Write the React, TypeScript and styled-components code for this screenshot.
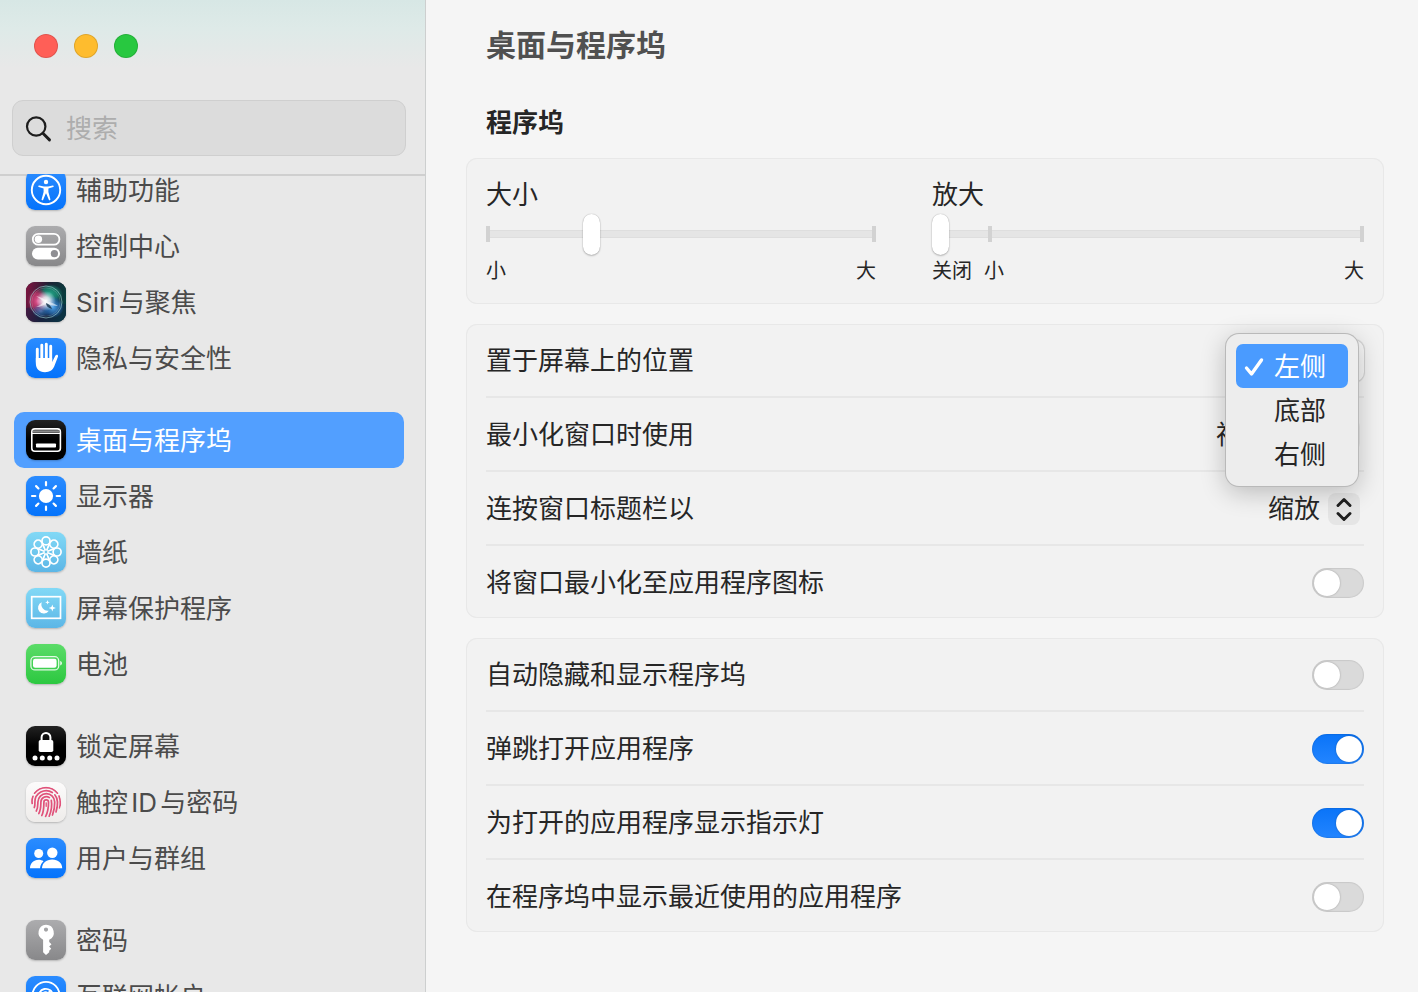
import React, { useState } from "react";
import styled, { createGlobalStyle, css } from "styled-components";

const GlobalStyle = createGlobalStyle`
  *, *::before, *::after { box-sizing: border-box; }
  body {
    margin: 0;
    background: #f5f5f5;
    color: #262626;
    font-family: Inter, "Noto Sans CJK SC", sans-serif;
    font-size: 26px;
    line-height: 36px;
    text-autospace: normal;
  }
  input, select, button { font: inherit; color: inherit; margin: 0; }
`;

const Window = styled.div`
  display: flex;
  height: 100vh;
  overflow: hidden;
`;

/* ---------- sidebar ---------- */

const Sidebar = styled.aside`
  display: flex;
  flex-direction: column;
  flex: 0 0 426px;
  min-width: 0;
  border-right: 1px solid #cdcfcf;
  background: linear-gradient(180deg, #d7e7e5 0, #deeae8 28px, #e8e8e8 68px, #e8e8e8 100%);
`;

const SidebarHeader = styled.div`
  display: flex;
  flex-direction: column;
  gap: 42px;
  padding: 34px 19px 18px 12px;
`;

const TrafficLights = styled.div`
  display: flex;
  gap: 16px;
  padding-left: 22px;
`;

const Light = styled.button<{ $color: string }>`
  width: 24px;
  height: 24px;
  padding: 0;
  border: 1px solid rgba(0, 0, 0, 0.12);
  border-radius: 50%;
  background: ${(p) => p.$color};
`;

const SearchBox = styled.label`
  display: flex;
  align-items: center;
  gap: 11px;
  height: 56px;
  padding: 1px 12px 0;
  border: 1px solid #cfcfcf;
  border-radius: 11px;
  background: #dcdcdc;
`;

const SearchInput = styled.input`
  flex: 1;
  width: 100%;
  min-width: 0;
  padding: 0;
  border: 0;
  outline: 0;
  background: none;
  &::placeholder { color: #adadad; opacity: 1; }
`;

const NavScroller = styled.nav`
  flex: 1;
  min-height: 0;
  overflow: hidden;
  box-shadow: inset 0 2px #cfcfcf;
`;

const NavGroups = styled.div`
  display: flex;
  flex-direction: column;
  gap: 26px;
  margin-top: -12px;
  padding: 0 21px 0 14px;
`;

const NavGroup = styled.ul`
  margin: 0;
  padding: 0;
  list-style: none;
`;

const NavLink = styled.a<{ $selected: boolean }>`
  display: flex;
  align-items: center;
  gap: 10px;
  height: 56px;
  padding: 0 12px;
  border-radius: 10px;
  color: #4b4b4b;
  text-decoration: none;
  white-space: nowrap;
  ${(p) => p.$selected && css`
    background: #529fff;
    color: #fff;
  `}
`;

const NavLabel = styled.span`
  padding-top: 2px;
`;

const IconTile = styled.span<{ $fill: string }>`
  display: flex;
  align-items: center;
  justify-content: center;
  flex: 0 0 40px;
  height: 40px;
  overflow: hidden;
  border-radius: 9px;
  background: ${(p) => p.$fill};
  box-shadow: 0 1px 2px rgba(0, 0, 0, 0.22);
`;

/* ---------- main pane ---------- */

const Main = styled.main`
  flex: 1;
  min-width: 0;
  padding: 25px 34px 40px 40px;
`;

const Title = styled.h1`
  margin: 0;
  padding: 0 20px;
  color: #505050;
  font-size: 30px;
  line-height: 40px;
  font-weight: 700;
`;

const SectionTitle = styled.h2`
  margin: 0;
  padding: 40px 20px 17px;
  font-size: 26px;
  line-height: 36px;
  font-weight: 700;
`;

const Cards = styled.div`
  display: flex;
  flex-direction: column;
  gap: 20px;
`;

const Card = styled.section`
  padding: 0 20px;
  border-radius: 11px;
  background: #f2f2f2;
  box-shadow: inset 0 0 0 1px #e8e8e8;
`;

const SliderCard = styled(Card)`
  display: grid;
  grid-template-columns: 390fr 432fr;
  gap: 56px;
  padding-top: 19px;
  padding-bottom: 17px;
`;

const SliderField = styled.div`
  display: flex;
  flex-direction: column;
  min-width: 0;
`;

const tick = (at: string) =>
  `linear-gradient(#d2d2d2, #d2d2d2) ${at} 50% / 4px 16px no-repeat`;

const Slider = styled.input<{ $ticks: string[] }>`
  appearance: none;
  display: block;
  width: 100%;
  height: 42px;
  outline: 0;
  background:
    ${(p) => p.$ticks.map(tick).join(", ")},
    linear-gradient(#dedede 1px, #e5e5e5 1px 7px, #dedede 7px) 50% 50% / calc(100% - 4px) 8px no-repeat;
  &::-webkit-slider-thumb {
    appearance: none;
    width: 17px;
    height: 41px;
    border-radius: 9px;
    background: #fff;
    box-shadow: 0 0 1px rgba(0, 0, 0, 0.35), 0 1px 2px rgba(0, 0, 0, 0.22);
  }
`;

const SliderScale = styled.div`
  display: flex;
  gap: 12px;
  font-size: 20px;
  line-height: 32px;
`;

const ScaleEnd = styled.span`
  margin-left: auto;
`;

const Row = styled.div`
  position: relative;
  display: flex;
  align-items: center;
  justify-content: space-between;
  height: 72px;
  padding-top: 2px;
  & + & {
    height: 74px;
    border-top: 2px solid #e7e7e7;
  }
`;

const PickerWrap = styled.div`
  display: flex;
  align-items: center;
  gap: 8px;
  padding-right: 4px;
`;

const PickerSelect = styled.select`
  appearance: none;
  field-sizing: content;
  padding: 0;
  border: 0;
  outline: 0;
  background: none;
`;

const OpenSelect = styled(PickerSelect)`
  width: 128px;
  height: 42px;
  padding-left: 12px;
  border-radius: 10px;
  background: #f6f6f6;
  box-shadow: 0 0 1px 1px rgba(0, 0, 0, 0.14);
`;

const Stepper = styled.span`
  display: flex;
  width: 32px;
  height: 32px;
  border-radius: 8px;
  background: #e5e5e5;
`;

const Menu = styled.div`
  position: absolute;
  z-index: 1;
  top: 10px;
  right: 6px;
  width: 132px;
  padding: 10px;
  border-radius: 13px;
  background: #ededed;
  box-shadow: 0 0 0 1px #b9b9b9, 0 6px 26px rgba(0, 0, 0, 0.24);
`;

const MenuItem = styled.button<{ $active: boolean }>`
  display: flex;
  align-items: center;
  gap: 10px;
  width: 100%;
  height: 44px;
  padding: 2px 8px 0;
  border: 0;
  border-radius: 7px;
  background: ${(p) => (p.$active ? "#4a9bff" : "none")};
  color: ${(p) => (p.$active ? "#fff" : "#262626")};
  white-space: nowrap;
`;

const CheckSlot = styled.span`
  display: flex;
  flex: 0 0 20px;
  height: 20px;
`;

const Switch = styled.input`
  appearance: none;
  display: flex;
  align-items: center;
  width: 52px;
  height: 30px;
  padding: 0 2px;
  border-radius: 15px;
  background: #dadada;
  box-shadow: inset 0 0 1px 1px rgba(0, 0, 0, 0.08);
  &::before {
    content: "";
    width: 26px;
    height: 26px;
    border-radius: 50%;
    background: #fff;
    box-shadow: 0 0 2px rgba(0, 0, 0, 0.3);
  }
  &:checked {
    justify-content: flex-end;
    background: linear-gradient(#0a74f8, #2385ff);
  }
`;

/* ---------- icons ---------- */

const Svg = ({ children }: { children: React.ReactNode }) => (
  <svg width="40" height="40" viewBox="0 0 40 40" fill="none" aria-hidden="true">
    {children}
  </svg>
);

const turns = [0, 45, 90, 135, 180, 225, 270, 315];

const AccessibilityIcon = () => (
  <Svg>
    <circle cx="20" cy="20" r="14.2" stroke="#fff" strokeWidth="1.9" />
    <circle cx="20" cy="12" r="2.2" fill="#fff" />
    <path d="M13.2 15.4 18 16.6h4l4.8-1.2c1-.2 1.3 1.2.4 1.5L22.4 18.4v3.6l2 7.2c.2 1-1.2 1.4-1.6.5L20.2 23.4h-.4l-2.6 6.3c-.4.9-1.8.5-1.6-.5l2-7.2v-3.6l-4.8-1.5c-.9-.3-.6-1.7.4-1.5Z" fill="#fff" />
  </Svg>
);

const ControlCenterIcon = () => (
  <Svg>
    <rect x="6.8" y="7.8" width="26.6" height="10.8" rx="5.4" stroke="#fff" strokeWidth="1.8" />
    <circle cx="12.4" cy="13.2" r="3.7" fill="#fff" />
    <rect x="6" y="21.8" width="28" height="11.6" rx="5.8" fill="#fff" />
    <circle cx="28.4" cy="27.6" r="3.6" fill="#8e8e93" />
  </Svg>
);

const SiriIcon = () => (
  <Svg>
    <defs>
      <linearGradient id="siriBg" x1="0" y1="8" x2="40" y2="18" gradientUnits="userSpaceOnUse">
        <stop stopColor="#7d1440" /><stop offset=".5" stopColor="#1d2134" /><stop offset="1" stopColor="#07403f" />
      </linearGradient>
      <radialGradient id="siriPink"><stop stopColor="#ea5a94" /><stop offset=".6" stopColor="#c8386f" stopOpacity=".75" /><stop offset="1" stopColor="#a82458" stopOpacity="0" /></radialGradient>
      <radialGradient id="siriGreen"><stop stopColor="#25a486" /><stop offset=".6" stopColor="#178a72" stopOpacity=".8" /><stop offset="1" stopColor="#12806c" stopOpacity="0" /></radialGradient>
      <radialGradient id="siriBlue"><stop stopColor="#52a8ee" /><stop offset=".6" stopColor="#2a70b8" stopOpacity=".7" /><stop offset="1" stopColor="#1d62b8" stopOpacity="0" /></radialGradient>
      <radialGradient id="siriCore"><stop stopColor="#fff" /><stop offset=".4" stopColor="#f6f8ff" stopOpacity=".8" /><stop offset="1" stopColor="#cfe4ff" stopOpacity="0" /></radialGradient>
    </defs>
    <rect width="40" height="40" fill="url(#siriBg)" />
    <path d="M0 26 40 22v18H0Z" fill="#12204c" opacity=".4" />
    <ellipse cx="24" cy="12" rx="13" ry="10" fill="url(#siriGreen)" />
    <ellipse cx="12" cy="19" rx="11" ry="13" fill="url(#siriPink)" />
    <ellipse cx="27" cy="25" rx="11" ry="11" fill="url(#siriBlue)" />
    <ellipse cx="15" cy="29" rx="9" ry="7" fill="url(#siriBlue)" opacity=".6" />
    <circle cx="20" cy="19" r="10" fill="url(#siriCore)" />
    <path d="M10 14c5 1 9 3 11 6 4 0 8 2 11 4-5 0-9-1-11-3-3 2-6 4-11 4 4-2 6-3 8-5-2-2-5-4-8-6Z" fill="#fff" opacity=".55" />
    <path d="M20 21c3 1 5 3 6 6-4-1-6-3-6-6Z" fill="#0e2a44" opacity=".8" />
    <circle cx="20" cy="20" r="16" stroke="#9ccbcc" strokeOpacity=".65" strokeWidth="1" />
    <circle cx="20" cy="20" r="14.2" stroke="#fff" strokeOpacity=".2" strokeWidth=".8" />
  </Svg>
);

const HandIcon = () => (
  <Svg>
    <g stroke="#fff" strokeWidth="2.9" strokeLinecap="round">
      <path d="M11.3 11.2v13M15.8 7.2V22M20.3 6.3V22M24.700 8.300V23" />
    </g>
    <path d="M9.850 20h16.300v4l3.300-6.500c.9-1.500 3-.8 2.600.9L28.200 28.600c-1.700 3.800-4.500 5.600-9.200 5.600-6 0-9.150-3.500-9.150-8.600Z" fill="#fff" />
  </Svg>
);

const DockIcon = () => (
  <Svg>
    <rect x="5.8" y="8.9" width="28.6" height="22.4" rx="3" stroke="#fff" strokeWidth="1.6" />
    <path d="M6.600 11.200h27" stroke="#8b8b8b" strokeWidth="2" />
    <path d="M6 13.300h28" stroke="#fff" strokeWidth="1.300" />
    <rect x="10" y="23.400" width="20" height="4.200" rx=".8" fill="#fff" />
  </Svg>
);

const SunIcon = () => (
  <Svg>
    <circle cx="20" cy="20" r="7.100" fill="#fff" />
    {turns.map((t) => (
      <path key={t} d="M20 9.300V6" stroke="#fff" strokeWidth="2.200" strokeLinecap="round" transform={`rotate(${t} 20 20)`} />
    ))}
  </Svg>
);

const FlowerIcon = () => (
  <Svg>
    {turns.map((t) => (
      <g key={t} stroke="#fff" strokeLinejoin="round" transform={`rotate(${t} 20 20)`}>
        <circle cx="20" cy="8.900" r="4" strokeWidth="1.700" />
        <path d="M16.600 11.200 20 20l3.400-8.800" strokeWidth="1.300" />
      </g>
    ))}
    <circle cx="20" cy="20" r="1.400" fill="#6fc6ea" />
  </Svg>
);

const ScreenSaverIcon = () => (
  <Svg>
    <rect x="5.700" y="8.700" width="28.800" height="21.600" stroke="#fff" strokeWidth="1.700" />
    <path d="M15.800 14.300a5.800 5.800 0 1 0 7 8.400 6.300 6.300 0 0 1-7-8.400Z" fill="#fff" />
    <path d="m21.500 12 .6 1.700 1.700.6-1.700.6-.6 1.700-.6-1.700-1.700-.6 1.700-.6ZM26.300 16.400l.9 2.700 2.700.9-2.700.9-.9 2.700-.9-2.700-2.700-.9 2.700-.9Z" fill="#fff" />
  </Svg>
);

const BatteryIcon = () => (
  <Svg>
    <rect x="4.900" y="12.700" width="27.800" height="13.200" rx="4" stroke="#fff" strokeOpacity=".85" strokeWidth="1.300" />
    <rect x="7" y="14.800" width="23.600" height="9" rx="2.200" fill="#fff" />
    <path d="M34.200 17.100c1.200.4 1.800 1.200 1.800 2.200s-.6 1.800-1.800 2.200Z" fill="#fff" fillOpacity=".85" />
  </Svg>
);

const LockIcon = () => (
  <Svg>
    <path d="M15.600 15v-3.700a4.400 4.400 0 0 1 8.800 0V15" stroke="#fff" strokeWidth="2" />
    <rect x="12.700" y="14" width="14.600" height="12" rx="1.800" fill="#fff" />
    {[9, 16.3, 23.7, 31].map((x) => <circle key={x} cx={x} cy="32" r="2.500" fill="#fff" />)}
  </Svg>
);

const FingerprintIcon = () => (
  <Svg>
    <defs>
      <clipPath id="fingertip"><circle cx="20" cy="20" r="15.400" /></clipPath>
    </defs>
    <g clipPath="url(#fingertip)" stroke="#e0527a" strokeWidth="1.700" strokeLinecap="round">
      <path d="M8.500 11.200A14.500 14.500 0 0 1 31.500 11.200" />
      <path d="M6.200 21.500c-.4-2.500-.1-5 .8-7.200M33 14c1.500 4 1.700 8 .6 12" />
      <path d="M8.300 25.500c.8-2 .6-3.500.6-5.500a11.300 11.300 0 0 1 17.400-9.500" />
      <path d="M28.800 12.800c4 4.700 3 11.200 1.200 17.200" />
      <path d="M10.300 29c1.700-3 1.500-6 1.600-9a8.400 8.400 0 0 1 16.800 0c.1 4.500-.6 8.500-2.200 13" />
      <path d="M12.800 31.600c2.200-4 2-7.600 2.100-11.600a5.400 5.400 0 0 1 8.500-4.400" />
      <path d="M25.300 18.300c.9 5-.1 11-2.100 16" />
      <path d="M15.800 33.500c2.200-4.500 2-9 2.100-13.300a2.300 2.300 0 0 1 4.600 0c.1 5-.8 10-2.900 14.300" />
      <path d="M20.200 20.800v3.500" strokeWidth="1.300" />
    </g>
  </Svg>
);

const UsersIcon = () => (
  <Svg>
    <circle cx="12.700" cy="15.500" r="4.500" fill="#fff" />
    <circle cx="26.300" cy="14.800" r="5.200" fill="#fff" />
    <path d="M4 30.300c0-5 3.500-8.600 8.500-8.600 2 0 3.700.5 5 1.500-2 1.800-3.200 4-3.500 7.100Z" fill="#fff" />
    <path d="M16 30.300c0-5.300 4.200-8.800 10.200-8.800s10 3.500 10 8.800Z" fill="#fff" />
  </Svg>
);

const KeyIcon = () => (
  <Svg>
    <path fillRule="evenodd" d="M20 4.800a7.800 7.800 0 0 1 3.200 14.900v2.200l2.300 2.300-2.300 2.300 2 2.200-2 2v1.600L20 35l-2.900-2.800V19.700A7.800 7.800 0 0 1 20 4.800Zm0 2.700a2.100 2.100 0 1 0 0 4.200 2.100 2.100 0 0 0 0-4.200Z" fill="#fff" />
  </Svg>
);

const InternetIcon = () => (
  <Svg>
    <circle cx="20" cy="19.500" r="13.600" stroke="#fff" strokeWidth="1.900" />
    <circle cx="19.500" cy="19.700" r="3.400" stroke="#fff" strokeWidth="1.900" />
    <path d="M23.200 16v5c0 3 3.600 2.600 3.600-1.300a7 7 0 1 0-3 5.900" stroke="#fff" strokeWidth="1.900" strokeLinecap="round" />
  </Svg>
);

const SearchIcon = () => (
  <svg width="30" height="30" viewBox="0 0 30 30" fill="none" stroke="#1d1d1d" strokeLinecap="round" aria-hidden="true">
    <circle cx="11.200" cy="12.500" r="9.200" strokeWidth="2.200" />
    <path d="m17.900 19.300 6.600 6.600" strokeWidth="2.900" />
  </svg>
);

const blue = "linear-gradient(#2b8cff, #0573fb)";
const gray = "linear-gradient(#acacae, #88888a)";
const sky = "linear-gradient(#82d9f6, #5cb6e6)";
const black = "linear-gradient(#222, #000 50%)";

type Item = { label: string; fill: string; icon: React.ReactNode };

const groups: Item[][] = [
  [
    { label: "辅助功能", fill: blue, icon: <AccessibilityIcon /> },
    { label: "控制中心", fill: gray, icon: <ControlCenterIcon /> },
    { label: "Siri与聚焦", fill: "#1c1f2e", icon: <SiriIcon /> },
    { label: "隐私与安全性", fill: blue, icon: <HandIcon /> },
  ],
  [
    { label: "桌面与程序坞", fill: black, icon: <DockIcon /> },
    { label: "显示器", fill: blue, icon: <SunIcon /> },
    { label: "墙纸", fill: sky, icon: <FlowerIcon /> },
    { label: "屏幕保护程序", fill: sky, icon: <ScreenSaverIcon /> },
    { label: "电池", fill: "linear-gradient(#5bdc68, #2cc840)", icon: <BatteryIcon /> },
  ],
  [
    { label: "锁定屏幕", fill: black, icon: <LockIcon /> },
    { label: "触控ID与密码", fill: "linear-gradient(#fcfbfb, #eeecea)", icon: <FingerprintIcon /> },
    { label: "用户与群组", fill: blue, icon: <UsersIcon /> },
  ],
  [
    { label: "密码", fill: gray, icon: <KeyIcon /> },
    { label: "互联网帐户", fill: blue, icon: <InternetIcon /> },
  ],
];

/* ---------- rows ---------- */

const SwitchRow = ({ id, label, on = false }: { id: string; label: string; on?: boolean }) => (
  <Row>
    <label htmlFor={id}>{label}</label>
    <Switch id={id} type="checkbox" role="switch" defaultChecked={on} />
  </Row>
);

const PickerRow = ({ id, label, options }: { id: string; label: string; options: string[] }) => (
  <Row>
    <label htmlFor={id}>{label}</label>
    <PickerWrap>
      <PickerSelect id={id}>
        {options.map((o) => <option key={o}>{o}</option>)}
      </PickerSelect>
      <Stepper>
        <svg width="32" height="32" viewBox="0 0 32 32" fill="none" stroke="#1f1f1f" strokeWidth="2.900" strokeLinecap="round" strokeLinejoin="round" aria-hidden="true">
          <path d="m10 12.500 6-6 6 6M10 20.500l6 6 6-6" />
        </svg>
      </Stepper>
    </PickerWrap>
  </Row>
);

const positions = ["左侧", "底部", "右侧"];

export default function App() {
  const [position, setPosition] = useState("左侧");
  const [selected, setSelected] = useState("桌面与程序坞");

  return (
    <>
      <GlobalStyle />
      <Window>
        <Sidebar>
          <SidebarHeader>
            <TrafficLights>
              <Light $color="#ff5f57" aria-label="关闭" />
              <Light $color="#febc2e" aria-label="最小化" />
              <Light $color="#28c840" aria-label="缩放" />
            </TrafficLights>
            <SearchBox>
              <SearchIcon />
              <SearchInput type="text" placeholder="搜索" aria-label="搜索" />
            </SearchBox>
          </SidebarHeader>
          <NavScroller>
            <NavGroups>
              {groups.map((items) => (
                <NavGroup key={items[0].label}>
                  {items.map((item) => (
                    <li key={item.label}>
                      <NavLink href="#" $selected={item.label === selected} onClick={() => setSelected(item.label)}>
                        <IconTile $fill={item.fill}>{item.icon}</IconTile>
                        <NavLabel>{item.label}</NavLabel>
                      </NavLink>
                    </li>
                  ))}
                </NavGroup>
              ))}
            </NavGroups>
          </NavScroller>
        </Sidebar>

        <Main>
          <Title>桌面与程序坞</Title>
          <SectionTitle>程序坞</SectionTitle>
          <Cards>
            <SliderCard>
              <SliderField>
                <label htmlFor="size">大小</label>
                <Slider id="size" type="range" min={0} max={100} defaultValue={26} $ticks={["0%", "100%"]} />
                <SliderScale>
                  <span>小</span>
                  <ScaleEnd>大</ScaleEnd>
                </SliderScale>
              </SliderField>
              <SliderField>
                <label htmlFor="zoom">放大</label>
                <Slider id="zoom" type="range" min={0} max={100} defaultValue={0} $ticks={["13%", "100%"]} />
                <SliderScale>
                  <span>关闭</span>
                  <span>小</span>
                  <ScaleEnd>大</ScaleEnd>
                </SliderScale>
              </SliderField>
            </SliderCard>

            <Card>
              <Row>
                <label htmlFor="position">置于屏幕上的位置</label>
                <OpenSelect id="position" value={position} onChange={(e) => setPosition(e.target.value)}>
                  {positions.map((p) => <option key={p}>{p}</option>)}
                </OpenSelect>
                <Menu role="menu">
                  {positions.map((p) => (
                    <MenuItem key={p} role="menuitemradio" aria-checked={p === position} $active={p === position} onClick={() => setPosition(p)}>
                      <CheckSlot>
                        {p === position && (
                          <svg width="20" height="20" viewBox="0 0 20 20" fill="none" stroke="#fff" strokeWidth="3.400" strokeLinecap="round" strokeLinejoin="round" aria-hidden="true">
                            <path d="m2.500 11 5 6L17.500 3" />
                          </svg>
                        )}
                      </CheckSlot>
                      {p}
                    </MenuItem>
                  ))}
                </Menu>
              </Row>
              <PickerRow id="effect" label="最小化窗口时使用" options={["神奇效果", "缩放效果"]} />
              <PickerRow id="titlebar" label="连按窗口标题栏以" options={["缩放", "最小化"]} />
              <SwitchRow id="minimize" label="将窗口最小化至应用程序图标" />
            </Card>

            <Card>
              <SwitchRow id="autohide" label="自动隐藏和显示程序坞" />
              <SwitchRow id="bounce" label="弹跳打开应用程序" on />
              <SwitchRow id="indicators" label="为打开的应用程序显示指示灯" on />
              <SwitchRow id="recents" label="在程序坞中显示最近使用的应用程序" />
            </Card>
          </Cards>
        </Main>
      </Window>
    </>
  );
}
